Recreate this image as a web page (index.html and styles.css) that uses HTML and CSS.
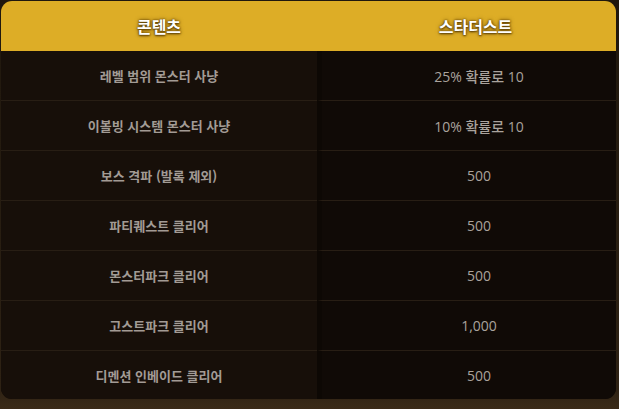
FILE: index.html
```html
<!DOCTYPE html>
<html lang="ko">
<head>
<meta charset="UTF-8">
<meta name="viewport" content="width=device-width, initial-scale=1.0">
<link rel="stylesheet" href="styles.css">
</head>
<body>
  <div class="board">
    <div class="table">
      <div class="cell head">콘텐츠</div>
      <div class="cell head right">스타더스트</div>

      <div class="cell">레벨 범위 몬스터 사냥</div>
      <div class="cell right num">25% 확률로 10</div>

      <div class="cell">이볼빙 시스템 몬스터 사냥</div>
      <div class="cell right num">10% 확률로 10</div>

      <div class="cell">보스 격파 (발록 제외)</div>
      <div class="cell right num">500</div>

      <div class="cell">파티퀘스트 클리어</div>
      <div class="cell right num">500</div>

      <div class="cell">몬스터파크 클리어</div>
      <div class="cell right num">500</div>

      <div class="cell">고스트파크 클리어</div>
      <div class="cell right num">1,000</div>

      <div class="cell last">디멘션 인베이드 클리어</div>
      <div class="cell right num last">500</div>
    </div>
  </div>
</body>
</html>
```

FILE: styles.css
```css
body {
  margin: 0;
  background-color: #2b2014;
  font-family: "Noto Sans CJK KR", "Noto Sans", sans-serif;
}

.board {
  width: 619px;
  height: 409px;
  padding: 1px 3px 0 1px;
  box-sizing: border-box;
  background: linear-gradient(#1f170d, #2e2214 95%, #3a2a18);
}

.table {
  display: grid;
  grid-template-columns: 316px 1fr;
  grid-auto-rows: 50px;
  border-radius: 11px;
  overflow: hidden;
  height: 398px;
  background-color: #150e08;
}

.cell {
  display: flex;
  align-items: center;
  justify-content: center;
  background-color: #170f09;
  border-bottom: 1px solid #281e14;
  color: #a29b95;
  font-size: 13px;
  font-weight: bold;
  box-sizing: border-box;
}

.cell.right {
  background-color: #100a06;
  border-left: 5px solid #0d0804;
  padding-left: 20px;
}

.cell.num {
  font-family: "Open Sans", "Noto Sans CJK KR", sans-serif;
  font-weight: 500;
  font-size: 14px;
  color: #aaa39d;
}

.cell.last {
  border-bottom: none;
  height: 48px;
}

.head {
  background-color: #ddad26;
  border-bottom: none;
  color: #fff;
  font-size: 16px;
  text-shadow: 0 0 2px #5e4106, 0 1px 2px #5e4106, 0 0 4px #7a560c;
}

.head.right {
  background-color: #ddad26;
  border-left: none;
  padding-left: 18px;
}
```
